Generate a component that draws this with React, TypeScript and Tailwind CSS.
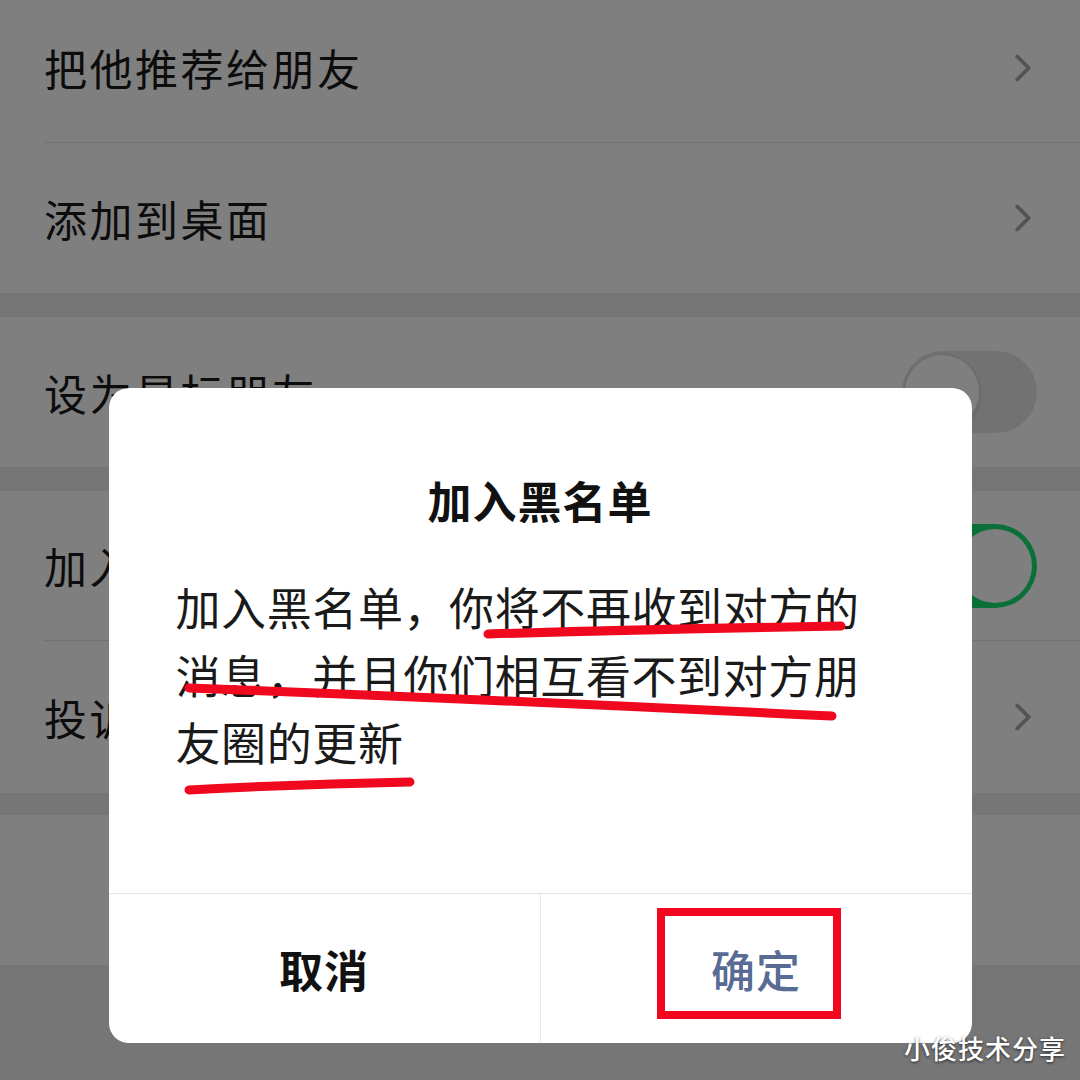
import { ChevronRight } from "lucide-react";

type RowProps = {
  label: string;
  right?: "chevron" | "off" | "on" | null;
  divider?: boolean;
  height?: string;
};

function Toggle({ on }: { on: boolean }) {
  if (on) {
    return (
      <div className="flex h-[84px] w-[136px] items-center justify-end rounded-full bg-[#15e070] px-[5px]">
        <div className="size-[74px] rounded-full bg-white" />
      </div>
    );
  }
  return (
    <div className="flex h-[82px] w-[135px] items-center rounded-full bg-[#e4e4e4] px-[2px]">
      <div className="size-[76px] rounded-full border border-[#d6d6d6] bg-white shadow-[0_2px_4px_rgba(0,0,0,0.12)]" />
    </div>
  );
}

function SettingRow({ label, right = "chevron", divider = false, height = "h-[150px]" }: RowProps) {
  return (
    <div className={`${height} bg-white pl-[44px]`}>
      <div
        className={`flex h-full items-center justify-between pr-[43px] ${
          divider ? "border-b border-[#e5e5e5]" : ""
        }`}
      >
        <span className="text-[43px] tracking-[2.5px] text-[#191919]">{label}</span>
        {right === "chevron" ? (
          <ChevronRight className="mr-[-9px] size-[46px] text-[#a6a6a6]" strokeWidth={2} />
        ) : null}
        {right === "off" ? <Toggle on={false} /> : null}
        {right === "on" ? <Toggle on /> : null}
      </div>
    </div>
  );
}

export default function App() {
  return (
    <div className="relative h-[1080px] w-[1080px] overflow-hidden bg-[#ededed] font-['Noto_Sans_CJK_SC','Noto_Sans',sans-serif]">
      <div className="-mt-[7px]">
        <SettingRow label="把他推荐给朋友" divider />
        <SettingRow label="添加到桌面" />
        <div className="h-[24px]" />
        <SettingRow label="设为星标朋友" right="off" />
        <div className="h-[24px]" />
        <SettingRow label="加入黑名单" right="on" divider />
        <SettingRow label="投诉" height="h-[152px]" />
        <div className="h-[22px]" />
        <div className="h-[150px] bg-white" />
      </div>

      {/* mask + dialog */}
      <div className="absolute inset-0 flex justify-center bg-black/50 pt-[388px]">
        <div className="flex h-[655px] w-[863px] flex-col overflow-hidden rounded-[20px] bg-white">
          <div className="flex h-[505px] flex-col pt-[82px]">
            <div className="text-center text-[44px] leading-[60px] font-bold tracking-[1px] text-[#111]">
              加入黑名单
            </div>
            <div className="mt-[43px] pl-[67px] text-[45px] leading-[67.5px] tracking-[0.6px] text-[#1a1a1a]">
              <div>加入黑名单，你将不再收到对方的</div>
              <div>消息，并且你们相互看不到对方朋</div>
              <div>友圈的更新</div>
            </div>
          </div>
          <div className="flex flex-1 border-t border-[#e5e5e5]">
            <button className="flex flex-1 items-center justify-center text-[44px] font-bold tracking-[1px] text-[#111]">
              取消
            </button>
            <div className="relative flex flex-1 items-center justify-center border-l border-[#e8e8e8]">
              <span className="text-[44px] font-medium tracking-[1px] text-[#576b95]">确定</span>
              <div className="absolute left-[116px] top-[14px] h-[111px] w-[184px] border-[8px] border-[#f2071f]" />
            </div>
          </div>
        </div>
      </div>

      {/* hand-drawn marks */}
      <svg className="pointer-events-none absolute inset-0" width="1080" height="1080" viewBox="0 0 1080 1080">
        <g fill="none" stroke="#f0081f" strokeLinecap="round" strokeWidth="9">
          <path d="M488 634 Q 660 629 841 626" />
          <path d="M189 688 Q 500 700 832 716" />
          <path d="M189 790 Q 300 784 410 782" />
        </g>
      </svg>

      <div className="absolute bottom-[14px] right-[14px] text-[26px] leading-[36px] font-medium tracking-[1px] text-white [text-shadow:0_1px_3px_rgba(0,0,0,0.7)]">
        小俊技术分享
      </div>
    </div>
  );
}
